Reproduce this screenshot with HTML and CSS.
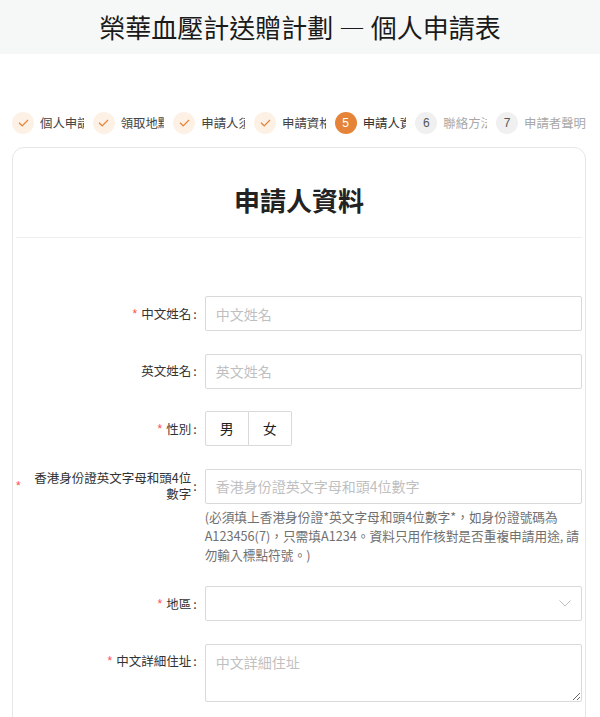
FILE: index.html
```html
<!DOCTYPE html>
<html lang="zh-Hant">
<head>
<meta charset="utf-8">
<title>榮華血壓計送贈計劃 — 個人申請表</title>
<link rel="stylesheet" href="styles.css">
</head>
<body>
<header class="topbar"><h1>榮華血壓計送贈計劃 — 個人申請表</h1></header>

<nav class="steps">
  <div class="step done"><span class="dot"><svg width="11" height="8" viewBox="0 0 11 8"><path d="M1 3.8l3.2 3 5.8-5.8" fill="none" stroke="#e58438" stroke-width="1.2"/></svg></span><span class="step-label">個人申請須知</span></div>
  <div class="step done"><span class="dot"><svg width="11" height="8" viewBox="0 0 11 8"><path d="M1 3.8l3.2 3 5.8-5.8" fill="none" stroke="#e58438" stroke-width="1.2"/></svg></span><span class="step-label">領取地點</span></div>
  <div class="step done"><span class="dot"><svg width="11" height="8" viewBox="0 0 11 8"><path d="M1 3.8l3.2 3 5.8-5.8" fill="none" stroke="#e58438" stroke-width="1.2"/></svg></span><span class="step-label">申請人須知</span></div>
  <div class="step done"><span class="dot"><svg width="11" height="8" viewBox="0 0 11 8"><path d="M1 3.8l3.2 3 5.8-5.8" fill="none" stroke="#e58438" stroke-width="1.2"/></svg></span><span class="step-label">申請資格</span></div>
  <div class="step active"><span class="dot">5</span><span class="step-label">申請人資料</span></div>
  <div class="step todo"><span class="dot">6</span><span class="step-label">聯絡方法</span></div>
  <div class="step todo"><span class="dot">7</span><span class="step-label">申請者聲明</span></div>
</nav>

<main class="card">
  <h2 class="card-title">申請人資料</h2>
  <form class="form">
    <div class="row">
      <div class="label-col"><label class="flabel req"><span class="txt">中文姓名</span></label></div>
      <div class="ctrl-col"><input class="input" type="text" placeholder="中文姓名"></div>
    </div>
    <div class="row">
      <div class="label-col"><label class="flabel"><span class="txt">英文姓名</span></label></div>
      <div class="ctrl-col"><input class="input" type="text" placeholder="英文姓名"></div>
    </div>
    <div class="row">
      <div class="label-col"><label class="flabel req"><span class="txt">性別</span></label></div>
      <div class="ctrl-col">
        <div class="radio-group"><span class="radio-btn">男</span><span class="radio-btn">女</span></div>
      </div>
    </div>
    <div class="row">
      <div class="label-col"><label class="flabel req"><span class="txt">香港身份證英文字母和頭4位數字</span></label></div>
      <div class="ctrl-col">
        <input class="input" type="text" placeholder="香港身份證英文字母和頭4位數字">
        <div class="help">(必須填上香港身份證*英文字母和頭4位數字*，如身份證號碼為A123456(7)，只需填A1234。資料只用作核對是否重複申請用途, 請勿輸入標點符號。)</div>
      </div>
    </div>
    <div class="row">
      <div class="label-col"><label class="flabel req"><span class="txt">地區</span></label></div>
      <div class="ctrl-col">
        <div class="select"><svg width="12" height="7" viewBox="0 0 12 7"><path d="M0.5 0.5l5.5 5.5 5.5-5.5" fill="none" stroke="#bfbfbf" stroke-width="1"/></svg></div>
      </div>
    </div>
    <div class="row">
      <div class="label-col"><label class="flabel req"><span class="txt">中文詳細住址</span></label></div>
      <div class="ctrl-col"><textarea class="textarea" placeholder="中文詳細住址"></textarea></div>
    </div>
  </form>
</main>
</body>
</html>
```

FILE: styles.css
```css
html, body {
  margin: 0;
  padding: 0;
  background: #fff;
}
body {
  font-family: "Noto Sans CJK TC", "Noto Sans", "Liberation Sans", sans-serif;
  color: #333;
}

.topbar {
  height: 54px;
  background: #f6f8f8;
  display: flex;
  align-items: center;
  justify-content: center;
}
.topbar h1 {
  margin: 0;
  font-size: 26px;
  line-height: 26px;
  font-weight: 400;
  color: #1a1a1a;
}

.steps {
  display: flex;
  padding: 0 14px 0 12px;
  margin-top: 58px;
  height: 22px;
}
.step {
  flex: 1 1 0;
  min-width: 0;
  display: flex;
  align-items: center;
  margin-right: 9px;
}
.step:last-child {
  flex: none;
  margin-right: 0;
}
.dot {
  flex: none;
  width: 22px;
  height: 22px;
  border-radius: 50%;
  display: flex;
  align-items: center;
  justify-content: center;
  margin-right: 6px;
  font-size: 12px;
  font-family: "Liberation Sans", sans-serif;
}
.step-label {
  white-space: nowrap;
  overflow: hidden;
  font-size: 12.4px;
  line-height: 22px;
  color: #444;
}
.done .dot { background: #fdf1e6; }
.active .dot { background: #e58438; color: #fff; }
.todo .dot { background: #f0f0f0; color: #555; }
.active .step-label { color: #333; }
.todo .step-label { color: #a8a8a8; }

.card {
  display: block;
  margin: 13px 14px 0 12px;
  border: 1px solid #e6e6e6;
  border-radius: 12px;
  padding: 0 3px 40px;
}
.card-title {
  margin: 0;
  text-align: center;
  font-size: 26px;
  line-height: 26px;
  font-weight: 700;
  color: #222;
  padding: 39px 0 24px;
  border-bottom: 1px solid #eeeeee;
}

.form {
  padding-top: 58px;
}
.row {
  display: flex;
  margin-bottom: 22.5px;
}
.label-col {
  flex: 0 0 33.333%;
  max-width: 33.333%;
  display: flex;
  justify-content: flex-end;
  align-items: flex-start;
}
.ctrl-col {
  flex: 1 1 auto;
  min-width: 0;
}
.flabel {
  display: flex;
  align-items: center;
  min-height: 35px;
  font-size: 12.5px;
  line-height: 16px;
  color: #333;
}
.flabel.req::before {
  content: "*";
  color: #ff4d4f;
  margin-right: 4px;
  font-size: 12px;
  font-family: "Liberation Sans", sans-serif;
}
.flabel::after {
  content: ":";
  margin: 0 8px 0 2px;
}
.flabel .txt {
  text-align: right;
}

.input,
.textarea,
.select {
  display: block;
  width: 100%;
  box-sizing: border-box;
  border: 1px solid #d9d9d9;
  border-radius: 2px;
  background: #fff;
  font-family: inherit;
  font-size: 14px;
  color: #333;
  margin: 0;
  outline: none;
}
.input {
  height: 35px;
  padding: 0 10px;
}
.input::placeholder,
.textarea::placeholder {
  color: #bfbfbf;
}
.select {
  height: 35px;
  display: flex;
  align-items: center;
  justify-content: flex-end;
  padding-right: 10px;
}
.textarea {
  height: 58px;
  padding: 6px 10px;
  line-height: 22px;
  resize: vertical;
}

.radio-group {
  display: flex;
}
.radio-btn {
  height: 35px;
  box-sizing: border-box;
  padding: 0 14px;
  border: 1px solid #d9d9d9;
  font-size: 14px;
  line-height: 33px;
  color: #222;
  background: #fff;
}
.radio-btn:first-child {
  border-radius: 2px 0 0 2px;
}
.radio-btn + .radio-btn {
  border-left: none;
  border-radius: 0 2px 2px 0;
}

.help {
  margin-top: 3px;
  font-size: 12.7px;
  line-height: 19px;
  color: #707070;
}
```
